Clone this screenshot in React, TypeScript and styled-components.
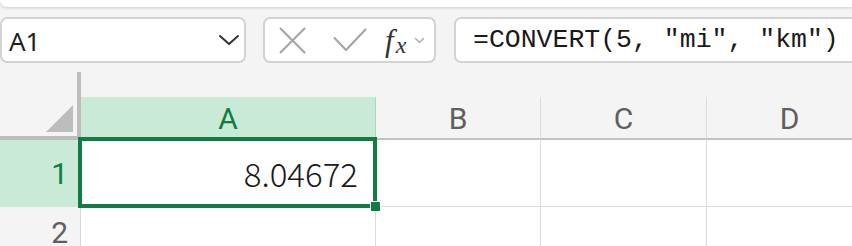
import React from "react";
import styled, { createGlobalStyle } from "styled-components";

const Global = createGlobalStyle`
  html, body { margin: 0; padding: 0; background: #f4f4f4; }
  body { overflow: hidden; }
`;

const Page = styled.div`
  width: 852px;
  height: 246px;
  overflow: hidden;
  background: #f4f4f4;
  font-family: "Noto Sans", sans-serif;
`;

const Ribbon = styled.div`
  height: 7px;
  background: #ffffff;
  border-bottom-left-radius: 10px;
  box-shadow: 0 1px 3px rgba(0, 0, 0, 0.16);
`;

const FormulaRow = styled.div`
  display: flex;
  margin-top: 10px;
  height: 46px;
`;

const Box = styled.div`
  box-sizing: border-box;
  height: 46px;
  background: #ffffff;
  border: 2px solid #d2d2d2;
  border-radius: 7px;
  display: flex;
  align-items: center;
`;

const NameBox = styled(Box)`
  flex: 0 0 246px;
  padding: 0 4px 0 7px;
  justify-content: space-between;
`;

const NameText = styled.span`
  font-family: "Noto Sans", sans-serif;
  font-size: 26px;
  color: #1f1f1f;
  line-height: 1;
  margin-top: 1px;
`;

const ActionsBox = styled(Box)`
  flex: 0 0 173px;
  margin-left: 17px;
  padding-left: 14px;
`;

const IconSlot = styled.span<{ $ml: number }>`
  display: flex;
  margin-left: ${(p) => p.$ml}px;
`;

const Fx = styled.span`
  display: flex;
  align-items: baseline;
  margin-left: 18px;
  font-family: "Liberation Serif", serif;
  font-style: italic;
  color: #333333;
  line-height: 1;
`;

const FxF = styled.span`
  font-size: 31px;
`;

const FxX = styled.span`
  font-size: 24px;
  margin-left: 2px;
  position: relative;
  top: 2px;
`;

const FormulaInput = styled(Box)`
  flex: 0 0 430px;
  margin-left: 18px;
  padding-left: 17px;
  border-right: none;
  border-top-right-radius: 0;
  border-bottom-right-radius: 0;
  font-family: "Liberation Mono", monospace;
  font-size: 26.5px;
  color: #1a1a1a;
  white-space: pre;
`;

const Sheet = styled.div`
  margin-top: 9px;
  display: flex;
  flex-direction: column;
`;

const HeaderRow = styled.div`
  display: flex;
  align-items: flex-end;
  height: 68px;
`;

const Corner = styled.div`
  position: relative;
  box-sizing: border-box;
  flex: 0 0 81px;
  height: 68px;
  border-right: 4px solid #bdbdbd;
  border-bottom: 4px solid #bdbdbd;
  background: #f4f4f4;
`;

const Triangle = styled.div`
  position: absolute;
  right: 4px;
  bottom: 4px;
  width: 0;
  height: 0;
  border-left: 27px solid transparent;
  border-bottom: 27px solid #bdbdbd;
`;

const ColHeader = styled.div<{ $w: number; $active?: boolean }>`
  box-sizing: border-box;
  flex: 0 0 ${(p) => p.$w}px;
  height: 43px;
  display: flex;
  align-items: center;
  justify-content: center;
  font-family: Roboto, "Noto Sans", sans-serif;
  font-size: 30px;
  color: ${(p) => (p.$active ? "#107c41" : "#5f5f5f")};
  background: ${(p) => (p.$active ? "#caead8" : "#f4f4f4")};
  border-right: 1px solid ${(p) => (p.$active ? "#a9d8bd" : "#dcdcdc")};
  border-bottom: 2px solid ${(p) => (p.$active ? "#caead8" : "#c2c2c2")};
  padding-top: 2px;
`;

const Row = styled.div<{ $h: number }>`
  display: flex;
  flex: 0 0 ${(p) => p.$h}px;
  height: ${(p) => p.$h}px;
`;

const RowHeader = styled.div<{ $active?: boolean }>`
  box-sizing: border-box;
  flex: 0 0 81px;
  display: flex;
  align-items: center;
  justify-content: flex-end;
  padding-right: 12px;
  font-family: Roboto, "Noto Sans", sans-serif;
  font-size: 30px;
  color: ${(p) => (p.$active ? "#107c41" : "#5f5f5f")};
  background: ${(p) => (p.$active ? "#caead8" : "#f4f4f4")};
  border-right: 1px solid #d6d6d6;
  border-bottom: 1px solid ${(p) => (p.$active ? "#caead8" : "#dcdcdc")};
`;

const Cell = styled.div<{ $w: number }>`
  position: relative;
  box-sizing: border-box;
  flex: 0 0 ${(p) => p.$w}px;
  background: #ffffff;
  border-right: 1px solid #dcdcdc;
  border-bottom: 1px solid #dcdcdc;
  display: flex;
  align-items: center;
  justify-content: flex-end;
  padding-right: 17px;
  font-family: "Noto Sans CJK JP Light", "Noto Sans CJK JP", "Noto Sans", sans-serif;
  font-weight: 300;
  font-size: 33px;
  color: #1a1a1a;
`;

const Selection = styled.div`
  position: absolute;
  z-index: 2;
  left: -3px;
  top: -3px;
  right: -2px;
  bottom: -2px;
  border: 4px solid #137c43;
  pointer-events: none;
`;

const Handle = styled.div`
  position: absolute;
  z-index: 3;
  right: -6px;
  bottom: -6px;
  width: 9px;
  height: 9px;
  background: #137c43;
  border: 1px solid #ffffff;
`;

const Chevron = ({ w, h, color, sw }: { w: number; h: number; color: string; sw: number }) => (
  <svg width={w} height={h} viewBox={`0 0 ${w} ${h}`} fill="none">
    <polyline
      points={`${sw},${sw} ${w / 2},${h - sw} ${w - sw},${sw}`}
      stroke={color}
      strokeWidth={sw}
      strokeLinecap="round"
      strokeLinejoin="round"
    />
  </svg>
);

const columns = [
  { key: "A", w: 295 },
  { key: "B", w: 165 },
  { key: "C", w: 166 },
  { key: "D", w: 166 },
];

export default function App() {
  return (
    <Page>
      <Global />
      <Ribbon />
      <FormulaRow>
        <NameBox>
          <NameText>A1</NameText>
          <Chevron w={22} h={12} color="#333333" sw={2} />
        </NameBox>
        <ActionsBox>
          <IconSlot $ml={0}>
            <svg width="27" height="27" viewBox="0 0 27 27" fill="none">
              <path d="M1.5 1.5 L25.5 25.5 M25.5 1.5 L1.5 25.5" stroke="#a3a3a3" strokeWidth="2" strokeLinecap="round" />
            </svg>
          </IconSlot>
          <IconSlot $ml={27}>
            <svg width="34" height="24" viewBox="0 0 34 24" fill="none">
              <path d="M1.5 10 L13 22 L32.5 1.5" stroke="#a3a3a3" strokeWidth="2" strokeLinecap="round" strokeLinejoin="round" />
            </svg>
          </IconSlot>
          <Fx>
            <FxF>f</FxF>
            <FxX>x</FxX>
          </Fx>
          <IconSlot $ml={8}>
            <Chevron w={11} h={7} color="#ababab" sw={1.5} />
          </IconSlot>
        </ActionsBox>
        <FormulaInput>=CONVERT(5, "mi", "km")</FormulaInput>
      </FormulaRow>
      <Sheet>
        <HeaderRow>
          <Corner>
            <Triangle />
          </Corner>
          {columns.map((c) => (
            <ColHeader key={c.key} $w={c.w} $active={c.key === "A"}>
              {c.key}
            </ColHeader>
          ))}
        </HeaderRow>
        <Row $h={67}>
          <RowHeader $active>1</RowHeader>
          {columns.map((c) => (
            <Cell key={c.key} $w={c.w}>
              {c.key === "A" && (
                <>
                  8.04672
                  <Selection />
                  <Handle />
                </>
              )}
            </Cell>
          ))}
        </Row>
        <Row $h={51}>
          <RowHeader>2</RowHeader>
          {columns.map((c) => (
            <Cell key={c.key} $w={c.w} />
          ))}
        </Row>
      </Sheet>
    </Page>
  );
}
